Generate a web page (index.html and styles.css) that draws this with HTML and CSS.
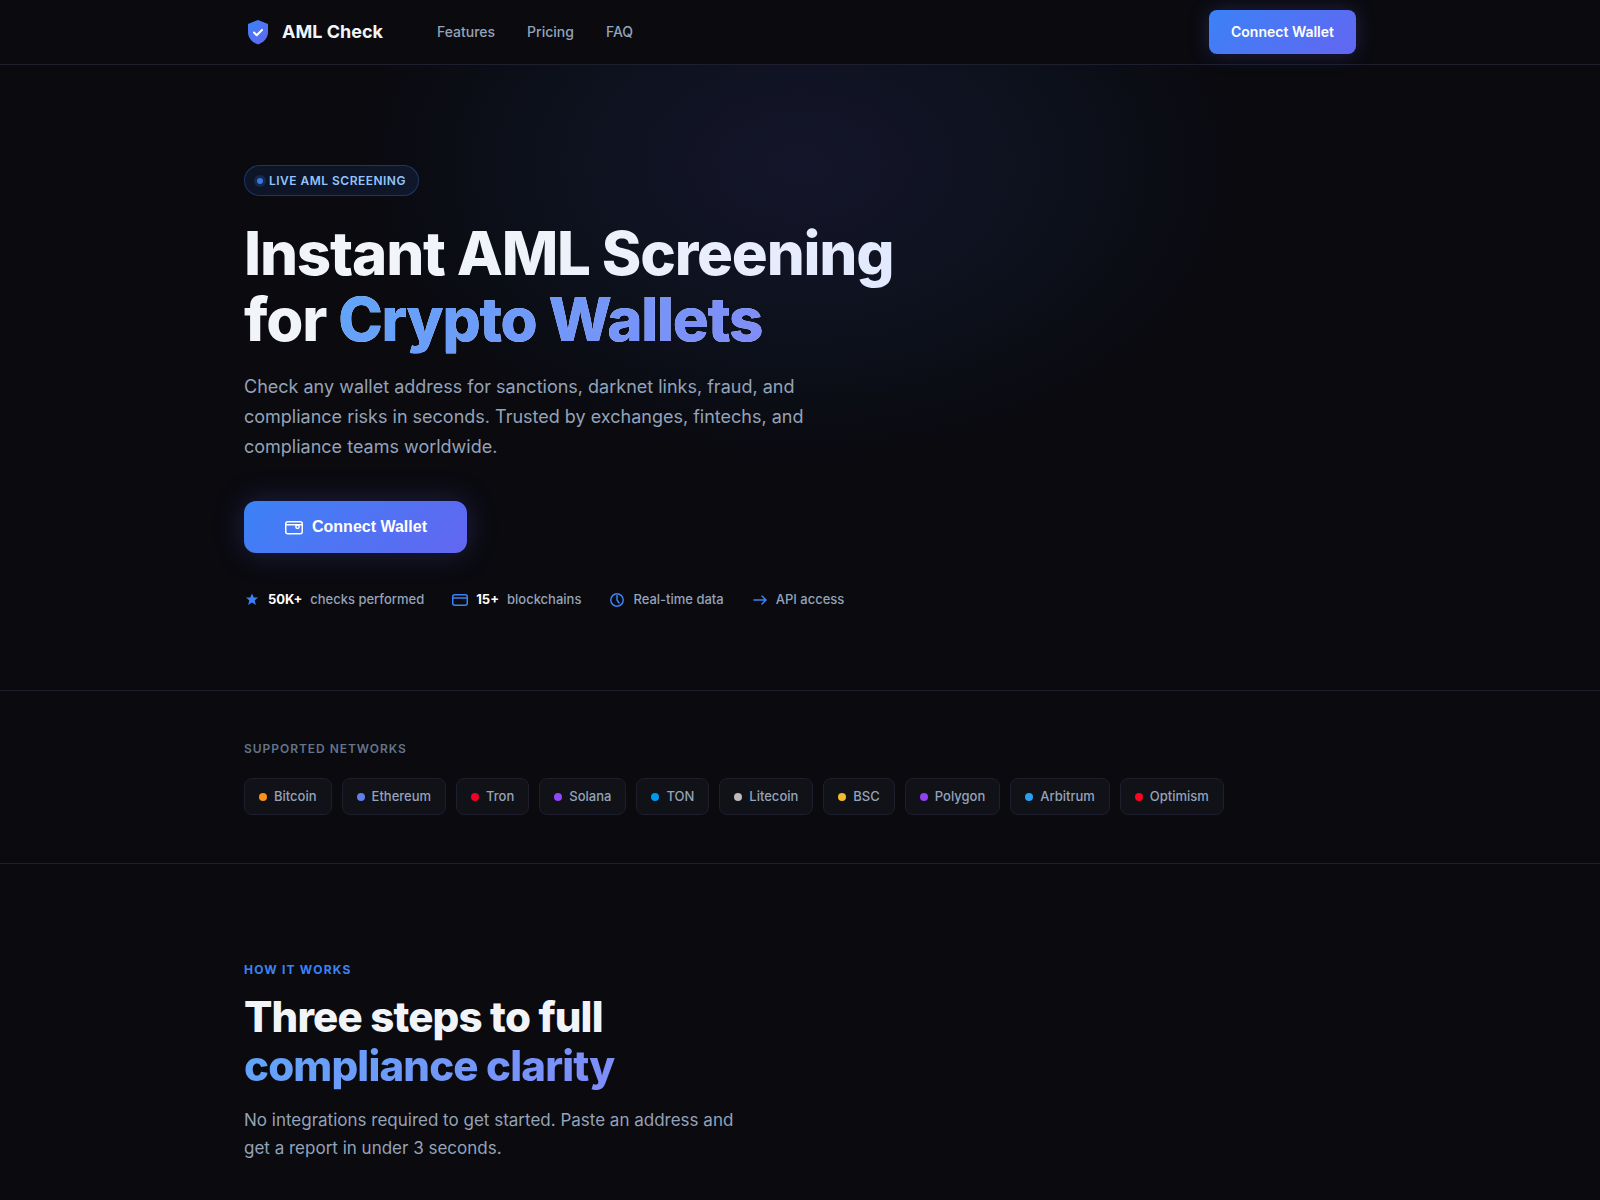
FILE: index.html
```html
<!doctype html>
<html lang="en">
  <head>
    <meta charset="UTF-8" />
    <meta name="viewport" content="width=device-width, initial-scale=1.0" />
    <title>AML Check</title>
    <link rel="stylesheet" href="styles.css">
  </head>
  <body>
    <!-- Navigation -->
    <header class="nav">
      <div class="container nav-inner">
        <a href="#" class="logo">
          <svg width="28" height="28" viewBox="0 0 28 28" fill="none" aria-hidden="true">
            <defs>
              <linearGradient id="logo-grad" x1="4" y1="2" x2="24" y2="26" gradientUnits="userSpaceOnUse">
                <stop stop-color="#3b82f6" />
                <stop offset="1" stop-color="#6366f1" />
              </linearGradient>
            </defs>
            <path d="M14 2L24 6v8c0 6-4.300 10.600-10 12.400C8.300 24.600 4 20 4 14V6L14 2z" fill="url(#logo-grad)" />
            <path d="M10 14.500l2.700 2.700 5.300-5.200" stroke="#fff" stroke-width="2" stroke-linecap="round" stroke-linejoin="round" />
          </svg>
          AML Check
        </a>
        <nav class="nav-links">
          <a href="#features">Features</a>
          <a href="#pricing">Pricing</a>
          <a href="#faq">FAQ</a>
        </nav>
        <button type="button" class="btn btn-nav">Connect Wallet</button>
      </div>
    </header>

    <main>
      <!-- Hero -->
      <section class="hero">
        <div class="container">
          <div class="badge"><span class="badge-dot"></span>Live AML Screening</div>
          <h1>Instant AML Screening<br>for <span class="grad">Crypto Wallets</span></h1>
          <p class="hero-text">Check any wallet address for sanctions, darknet links, fraud, and compliance risks in seconds. Trusted by exchanges, fintechs, and compliance teams worldwide.</p>
          <button type="button" class="btn btn-hero">
            <svg width="20" height="20" viewBox="0 0 20 20" fill="none" stroke="currentColor" stroke-width="1.500" aria-hidden="true">
              <rect x="1.750" y="4.750" width="16.500" height="12" rx="2" />
              <path d="M2 7.750h16" />
              <circle cx="13.500" cy="9.750" r="1.700" />
            </svg>
            Connect Wallet
          </button>
          <ul class="stats">
            <li>
              <svg width="16" height="16" viewBox="0 0 16 16" fill="currentColor" aria-hidden="true">
                <path d="M8 1.500l1.800 4h4.200l-3.300 2.900 1.200 4.600L8 10.500l-3.900 2.500 1.200-4.600L2 5.500h4.200z" />
              </svg>
              <strong>50K+</strong> checks performed
            </li>
            <li>
              <svg width="16" height="16" viewBox="0 0 16 16" fill="none" stroke="currentColor" stroke-width="1.500" aria-hidden="true">
                <rect x="0.750" y="2.750" width="14.500" height="10.500" rx="2" />
                <path d="M1 6h14" />
              </svg>
              <strong>15+</strong> blockchains
            </li>
            <li>
              <svg width="16" height="16" viewBox="0 0 16 16" fill="none" stroke="currentColor" stroke-width="1.500" stroke-linecap="round" aria-hidden="true">
                <circle cx="8" cy="8" r="6.200" />
                <path d="M8 3.500V8l2 3" />
              </svg>
              Real-time data
            </li>
            <li>
              <svg width="16" height="16" viewBox="0 0 16 16" fill="none" stroke="currentColor" stroke-width="1.500" stroke-linecap="round" stroke-linejoin="round" aria-hidden="true">
                <path d="M2 8h12M10 4l4 4-4 4" />
              </svg>
              API access
            </li>
          </ul>
        </div>
      </section>

      <!-- Networks -->
      <section class="networks">
        <div class="container">
          <div class="networks-label">Supported Networks</div>
          <ul class="chips">
            <li class="chip btc">Bitcoin</li>
            <li class="chip eth">Ethereum</li>
            <li class="chip trx">Tron</li>
            <li class="chip sol">Solana</li>
            <li class="chip ton">TON</li>
            <li class="chip ltc">Litecoin</li>
            <li class="chip bsc">BSC</li>
            <li class="chip pol">Polygon</li>
            <li class="chip arb">Arbitrum</li>
            <li class="chip op">Optimism</li>
          </ul>
        </div>
      </section>

      <!-- How it works -->
      <section class="section" id="features">
        <div class="container">
          <div class="section-label">How It Works</div>
          <h2>Three steps to full<br><span class="grad">compliance clarity</span></h2>
          <p class="section-text">No integrations required to get started. Paste an address and get a report in under 3 seconds.</p>
        </div>
      </section>
    </main>
  </body>
</html>
```
FILE: styles.css
```css
:root {
  --bg: #0a0a0f;
  --surface: #111118;
  --border: #1e1e2e;
  --text: #f1f5f9;
  --text-2: #94a3b8;
  --text-3: #64748b;
  --accent: #3b82f6;
  --grad: linear-gradient(135deg, #3b82f6, #6366f1);
}

* {
  margin: 0;
  padding: 0;
  box-sizing: border-box;
}

body {
  font-family: Inter, sans-serif;
  background: var(--bg);
  color: var(--text);
  line-height: 1.6;
}

ul {
  list-style: none;
}

a {
  color: inherit;
  text-decoration: none;
}

.container {
  max-width: 1160px;
  margin: 0 auto;
  padding: 0 24px;
}

.grad {
  background: linear-gradient(135deg, #60a5fa, #818cf8);
  -webkit-background-clip: text;
  background-clip: text;
  -webkit-text-fill-color: transparent;
}

/* Buttons */
.btn {
  display: inline-flex;
  align-items: center;
  justify-content: center;
  gap: 8px;
  border: none;
  background: var(--grad);
  color: #fff;
  font-weight: 600;
  cursor: pointer;
}

.btn-nav {
  padding: 11px 22px;
  border-radius: 8px;
  font-family: inherit;
  font-size: 14px;
  line-height: 1.6;
  box-shadow: 0 0 20px rgba(99, 102, 241, 0.25);
}

.btn-hero {
  height: 52px;
  padding: 0 40px;
  border-radius: 12px;
  font-family: "Liberation Sans", sans-serif;
  font-size: 16px;
  box-shadow: 0 0 30px rgba(99, 102, 241, 0.25);
}

/* Navigation */
.nav {
  position: sticky;
  top: 0;
  z-index: 10;
  background: var(--bg);
  border-bottom: 1px solid var(--border);
}

.nav-inner {
  display: flex;
  align-items: center;
  height: 64px;
}

.logo {
  display: flex;
  align-items: center;
  gap: 10px;
  font-size: 18px;
  font-weight: 700;
}

.nav-links {
  display: flex;
  gap: 32px;
  margin-left: 54px;
  font-size: 14px;
  font-weight: 500;
  color: var(--text-2);
}

.nav .btn {
  margin-left: auto;
}

/* Hero */
.hero {
  position: relative;
  overflow: hidden;
  padding: 100px 0 80px;
}

.hero::before {
  content: '';
  position: absolute;
  top: -200px;
  left: 50%;
  width: 900px;
  height: 600px;
  transform: translateX(-50%);
  background: radial-gradient(ellipse, rgba(99, 102, 241, 0.12) 0%, rgba(59, 130, 246, 0.06) 40%, transparent 70%);
}

.hero .container {
  position: relative;
}

.badge {
  display: inline-flex;
  align-items: center;
  gap: 6px;
  padding: 5px 12px;
  border: 1px solid rgba(59, 130, 246, 0.3);
  border-radius: 16px;
  background: rgba(59, 130, 246, 0.1);
  color: #93c5fd;
  font-size: 12px;
  font-weight: 600;
  letter-spacing: 0.04em;
  text-transform: uppercase;
}

.badge-dot {
  width: 6px;
  height: 6px;
  border-radius: 50%;
  background: var(--accent);
  box-shadow: 0 0 0 3px rgba(59, 130, 246, 0.2);
  opacity: 0.9;
}

h1 {
  width: fit-content;
  margin: 24px 0 20px;
  font-size: 60px;
  font-weight: 800;
  line-height: 66px;
  letter-spacing: -0.02em;
  background: linear-gradient(135deg, #f1f5f9 30%, #e0e7ff);
  -webkit-background-clip: text;
  background-clip: text;
  -webkit-text-fill-color: transparent;
}

.hero-text {
  max-width: 580px;
  margin-bottom: 40px;
  color: var(--text-2);
  font-size: 18px;
  line-height: 1.65;
}

.stats {
  display: flex;
  flex-wrap: wrap;
  gap: 28px;
  margin-top: 36px;
  color: var(--text-2);
  font-size: 13px;
  font-weight: 500;
}

.stats li {
  display: flex;
  align-items: center;
  gap: 8px;
}

.stats svg {
  color: var(--accent);
}

.stats strong {
  color: #fff;
  font-weight: 700;
}

/* Networks */
.networks {
  padding: 48px 0;
  border-top: 1px solid var(--border);
  border-bottom: 1px solid var(--border);
}

.networks-label {
  margin-bottom: 20px;
  color: var(--text-3);
  font-size: 12px;
  font-weight: 600;
  letter-spacing: 0.08em;
  text-transform: uppercase;
}

.chips {
  display: flex;
  flex-wrap: wrap;
  gap: 10px;
}

.chip {
  display: flex;
  align-items: center;
  gap: 7px;
  padding: 7px 14px;
  border: 1px solid var(--border);
  border-radius: 8px;
  background: var(--surface);
  color: var(--text-2);
  font-size: 13px;
  font-weight: 500;
}

.chip::before {
  content: '';
  width: 8px;
  height: 8px;
  border-radius: 50%;
  background: currentColor;
}

.btc::before { background: #f7931a; }
.eth::before { background: #627eea; }
.trx::before { background: #ef0027; }
.sol::before { background: #9146f8; }
.ton::before { background: #0098ea; }
.ltc::before { background: #bfbbbb; }
.bsc::before { background: #f3ba2f; }
.pol::before { background: #8f42ee; }
.arb::before { background: #28a0f0; }
.op::before { background: #ff0420; }

/* Sections */
.section {
  padding: 96px 0;
}

.section-label {
  margin-bottom: 14px;
  color: var(--accent);
  font-size: 12px;
  font-weight: 700;
  letter-spacing: 0.1em;
  text-transform: uppercase;
}

h2 {
  margin-bottom: 16px;
  font-size: 42px;
  font-weight: 800;
  line-height: 1.15;
  letter-spacing: -0.02em;
}

.section-text {
  max-width: 520px;
  color: var(--text-2);
  font-size: 17px;
  line-height: 1.65;
}

/* Small screens */
@media (max-width: 768px) {
  .nav-links {
    display: none;
  }

  h1 {
    font-size: 40px;
    line-height: 44px;
  }

  h2 {
    font-size: 32px;
  }
}
```
